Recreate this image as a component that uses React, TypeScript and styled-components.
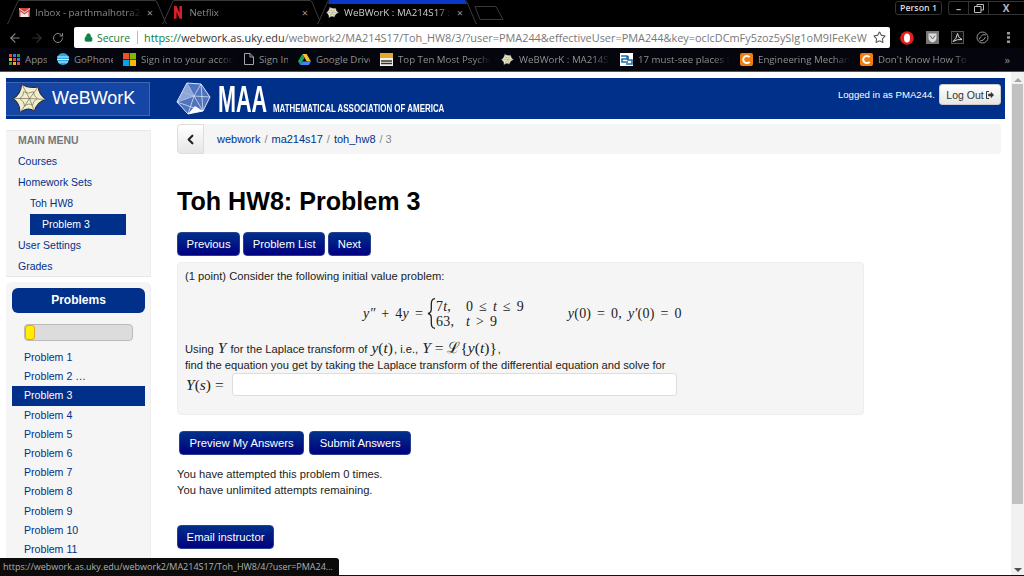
import React from 'react'
import styled, { createGlobalStyle } from 'styled-components'
import { ArrowLeft, ArrowRight, RotateCw, Star, Lock, ChevronLeft } from 'lucide-react'

const GlobalStyle = createGlobalStyle`
  html, body {
    margin: 0;
    padding: 0;
    height: 576px;
    overflow: hidden;
    background: #000;
  }
  * { box-sizing: border-box; }
`

const Screen = styled.div`
  position: relative;
  width: 1024px;
  height: 576px;
  display: flex;
  flex-direction: column;
  overflow: hidden;
  background: #000;
  font-family: "Liberation Sans", Arial, sans-serif;
`

/* ---- browser chrome ---- */

const TabStrip = styled.div`
  height: 27px;
  flex: none;
  display: flex;
  align-items: flex-start;
  padding-left: 7px;
`

const Tab = styled.div<{ $active?: boolean }>`
  position: relative;
  width: 160px;
  height: 24px;
  margin-right: -5px;
  padding: 0 14px 0 12px;
  display: flex;
  align-items: center;
  gap: 5px;
  font-family: "Open Sans", sans-serif;
  font-size: 9.7px;
  color: ${p => (p.$active ? '#cfcfcf' : '#8a8a8a')};
`

const TabOutline = styled.svg`
  position: absolute;
  left: 0;
  top: 0;
`

const TabIcon = styled.span<{ $shift?: number }>`
  position: relative;
  flex: none;
  display: flex;
  margin-left: ${p => p.$shift ?? 0}px;
`

const TabTitle = styled.span`
  flex: 1;
  position: relative;
  white-space: nowrap;
  overflow: hidden;
  mask-image: linear-gradient(to right, #000 85%, transparent);
`

const TabClose = styled.span`
  position: relative;
  font-size: 11px;
  color: #999;
`

const NewTab = styled.svg`
  margin: 6px 0 0 2px;
`

const Spacer = styled.div`
  flex: 1;
`

const PersonButton = styled.div`
  width: 47px;
  height: 14px;
  margin: 1px 6px 0 0;
  border: 1px solid #333;
  border-radius: 3px;
  font-family: "Open Sans", sans-serif;
  font-weight: 600;
  font-size: 8.8px;
  line-height: 12px;
  text-align: center;
  color: #ddd;
`

const WindowControls = styled.div`
  width: 76px;
  height: 14px;
  margin-top: 1px;
  display: flex;
  border: 1px solid #333;
  border-right: none;
  border-radius: 3px 0 0 3px;
`

const WindowButton = styled.div<{ $wide?: boolean }>`
  width: ${p => (p.$wide ? '34px' : '20px')};
  display: flex;
  align-items: center;
  justify-content: center;
  border-right: 1px solid #333;
  color: #bbb;
  font-family: "Open Sans", sans-serif;
  font-size: 10px;
  font-weight: 700;
  &:last-child { border-right: none; }
`

const Toolbar = styled.div`
  height: 21px;
  flex: none;
  display: flex;
  align-items: center;
  padding-left: 8px;
  color: #888;
`

const NavIcons = styled.div`
  width: 66px;
  display: flex;
  align-items: center;
  gap: 8px;
`

const Omnibox = styled.div`
  width: 816px;
  height: 21px;
  flex: none;
  background: #fff;
  border-radius: 2px;
  display: flex;
  align-items: center;
  padding: 0 4px 0 10px;
  font-family: "Open Sans", sans-serif;
  font-size: 10.9px;
  color: #777;
`

const Secure = styled.span`
  color: #0b8043;
  margin-left: 4px;
  font-size: 10.4px;
`

const OmniDivider = styled.span`
  width: 1px;
  height: 13px;
  background: #bbb;
  margin: 0 6px 0 7px;
`

const Url = styled.span`
  flex: 1;
  white-space: nowrap;
  overflow: hidden;
`

const UrlScheme = styled.span`
  color: #0b8043;
`

const UrlHost = styled.span`
  color: #333;
`

const BookmarkStar = styled(Star)`
  margin-left: 6px;
  flex: none;
`

const ExtIcons = styled.div`
  flex: 1;
  display: flex;
  align-items: center;
  padding-left: 10px;
  gap: 12px;
`

const MenuDots = styled.svg`
  margin-left: 6px;
`

const BookmarkBar = styled.div`
  height: 24px;
  flex: none;
  display: flex;
  align-items: center;
  padding: 0 14px 1px 9px;
  background: #05060d;
  border-bottom: 1px solid #555;
  gap: 10px;
  font-family: "Open Sans", sans-serif;
  font-size: 9.7px;
  color: #8f8f8f;
`

const Bookmark = styled.div<{ $w: number }>`
  width: ${p => p.$w}px;
  flex: none;
  display: flex;
  align-items: center;
  gap: 5px;
`

const BookmarkLabel = styled.span<{ $fade?: boolean }>`
  flex: 1;
  white-space: nowrap;
  overflow: hidden;
  ${p => (p.$fade ? 'mask-image: linear-gradient(to right, #000 82%, transparent);' : '')}
`

const MoreBookmarks = styled.span`
  margin-left: auto;
  font-size: 11px;
`

/* ---- page ---- */

const Viewport = styled.div`
  flex: 1;
  min-height: 0;
  display: flex;
  background: #fff;
`

const Page = styled.div`
  flex: 1;
  min-width: 0;
  overflow: hidden;
  padding: 6px 6px 0;
  color: #000;
`

const Banner = styled.header`
  height: 41px;
  background: #00308a;
  display: flex;
  align-items: center;
`

const Brand = styled.div`
  width: 144px;
  height: 34px;
  display: flex;
  align-items: center;
  gap: 5px;
  padding-left: 6px;
  background: #1546a5;
  border: 1px solid #3f66b0;
  border-left: none;
  color: #fff;
  font-size: 18px;
`

const MaaLogo = styled.div`
  margin-left: 26px;
  display: flex;
  align-items: flex-end;
  color: #fff;
`

const MaaLetters = styled.span`
  width: 49px;
  margin-left: 7px;
  font-weight: 700;
  font-size: 36px;
  line-height: 30px;
  transform: scaleX(0.6);
  transform-origin: left center;
`

const MaaName = styled.span`
  width: 172px;
  margin: 0 0 1px 6px;
  font-weight: 700;
  font-size: 11.2px;
  line-height: 12px;
  white-space: nowrap;
  transform: scaleX(0.71);
  transform-origin: left center;
`

const LoggedIn = styled.div`
  margin: 0 4px 8px auto;
  color: #fff;
  font-size: 9.6px;
`

const LogOutButton = styled.div`
  width: 62px;
  height: 21px;
  margin: 0 4px 8px 0;
  background: linear-gradient(#fff, #e6e6e6);
  border: 1px solid #ccc;
  border-radius: 3px;
  display: flex;
  align-items: center;
  justify-content: center;
  gap: 2px;
  font-size: 10.5px;
  color: #333;
`

const Body = styled.div`
  display: flex;
  align-items: flex-start;
`

const Sidebar = styled.aside`
  width: 145px;
  flex: none;
  margin-top: 11px;
`

const MenuPanel = styled.nav`
  height: 147px;
  background: #f5f5f5;
  box-shadow: inset 0 1px #e8e8e8, inset 0 -1px #e8e8e8, inset -1px 0 #eee;
`

const MenuItem = styled.div<{ $head?: boolean; $nested?: boolean; $active?: boolean }>`
  height: 21px;
  line-height: 20px;
  font-size: 10.5px;
  margin-left: ${p => (p.$nested ? '24px' : '0')};
  margin-right: ${p => (p.$nested ? '25px' : '0')};
  padding-left: ${p => (p.$active ? '12px' : p.$nested ? '0' : '12px')};
  color: ${p => (p.$head ? '#777' : p.$active ? '#fff' : '#00308a')};
  font-weight: ${p => (p.$head ? 700 : 400)};
  background: ${p => (p.$active ? '#00308a' : 'transparent')};
`

const ProblemsPanel = styled.div`
  margin-top: 5px;
  height: 400px;
  padding: 6px 5px 0 6px;
  background: #f5f5f5;
  border-radius: 6px 6px 0 0;
  border-right: 1px solid #eee;
`

const ProblemsTitle = styled.div`
  height: 25px;
  background: #00308a;
  border-radius: 6px;
  color: #fff;
  font-weight: 700;
  font-size: 12px;
  line-height: 24px;
  text-align: center;
`

const ProgressTrack = styled.div`
  width: 109px;
  height: 17px;
  margin: 11px 0 7px 12px;
  background: #dcdcdc;
  border: 1px solid #bbb;
  border-radius: 4px;
`

const ProgressFill = styled.div`
  height: 100%;
  background: #ffee00;
  border: 1px solid #f0a020;
  border-radius: 3px;
`

const ProblemRow = styled.div<{ $active?: boolean }>`
  height: 19.2px;
  padding-left: 12px;
  font-size: 10.6px;
  line-height: 19px;
  color: ${p => (p.$active ? '#fff' : '#00308a')};
  background: ${p => (p.$active ? '#00308a' : 'transparent')};
`

const Main = styled.main`
  flex: 1;
  min-width: 0;
  margin: 5px 4px 0 26px;
  font-size: 11.2px;
`

const Crumbs = styled.div`
  height: 30px;
  display: flex;
  align-items: stretch;
`

const BackButton = styled.div`
  width: 27px;
  display: flex;
  align-items: center;
  justify-content: center;
  background: linear-gradient(#fff, #e6e6e6);
  border: 1px solid #ddd;
  border-radius: 4px 0 0 4px;
  color: #222;
`

const CrumbTrail = styled.div`
  flex: 1;
  display: flex;
  align-items: center;
  gap: 4px;
  padding: 0 0 0 13px;
  background: #f5f5f5;
  border-radius: 0 4px 4px 0;
  color: #888;
  font-size: 11px;
`

const CrumbLink = styled.span`
  color: #00308a;
`

const Title = styled.h1`
  height: 32px;
  margin: 31px 0 15px;
  font-size: 25.1px;
  line-height: 32px;
  font-weight: 700;
  color: #000;
`

const ButtonRow = styled.div<{ $inset?: number; $gap: number }>`
  display: flex;
  gap: ${p => p.$gap}px;
  margin-left: ${p => p.$inset ?? 0}px;
`

const DarkButton = styled.div<{ $pad?: number }>`
  width: fit-content;
  height: 24px;
  padding: 0 ${p => p.$pad ?? 8.6}px;
  background: linear-gradient(#00308a, #000080);
  border: 1px solid #24408f;
  border-radius: 4px;
  color: #fff;
  font-size: 11.3px;
  line-height: 22px;
  white-space: nowrap;
`

const ProblemBox = styled.section`
  width: 687px;
  height: 153px;
  margin: 6px 0 16px;
  padding: 5px 8px 5px 7px;
  background: #f5f5f5;
  border: 1px solid #eee;
  border-radius: 4px;
  font-size: 11.2px;
  color: #222;
`

const TextLine = styled.div<{ $top?: number }>`
  height: 16px;
  line-height: 16px;
  margin-top: ${p => p.$top ?? 0}px;
  white-space: nowrap;
`

const Equation = styled.div`
  height: 31px;
  margin: 14px 0 0 178px;
  display: flex;
  align-items: center;
  gap: 4px;
`

const MathText = styled.span`
  font-family: "Liberation Serif", "Times New Roman", serif;
  font-size: 14px;
  word-spacing: 2.2px;
  letter-spacing: .2px;
  line-height: 15px;
  color: #222;
  white-space: nowrap;
`

const InlineMath = styled.span`
  font-family: "Liberation Serif", "Times New Roman", serif;
  font-size: 15.5px;
  line-height: 15px;
  margin: 0 1px;
  color: #222;
  white-space: nowrap;
`

const Var = styled.i`
  font-style: italic;
`

const Cases = styled.div`
  display: grid;
  grid-template-columns: 30px auto;
  margin-left: -4px;
  line-height: 15px;
`

const InitialValues = styled.div`
  margin-left: 40px;
`

const AnswerRow = styled.div`
  height: 23px;
  display: flex;
  align-items: center;
  gap: 4px;
`

const AnswerInput = styled.div`
  width: 445px;
  height: 23px;
  background: #fff;
  border: 1px solid #ddd;
  border-radius: 3px;
  margin-left: auto;
  margin-right: 178px;
`

const Messages = styled.div`
  margin: 11px 0 27px;
  font-size: 11.2px;
  color: #222;
`

const Scrollbar = styled.div`
  width: 13px;
  flex: none;
  display: flex;
  flex-direction: column;
  align-items: center;
  padding: 6px 0 3px;
  background: #f1f1f1;
`

const ScrollArrow = styled.div<{ $down?: boolean }>`
  width: 0;
  height: 0;
  border-left: 4px solid transparent;
  border-right: 4px solid transparent;
  ${p => (p.$down ? 'border-top: 4px solid #505050;' : 'border-bottom: 4px solid #a3a3a3;')}
`

const ScrollThumb = styled.div`
  width: 11px;
  height: 420px;
  margin-top: 2px;
  background: #c1c1c1;
`

const PageEdge = styled.div`
  height: 1px;
  flex: none;
  background: #111;
`

const StatusBubble = styled.div`
  position: absolute;
  left: 0;
  bottom: 0;
  width: 339px;
  height: 18px;
  background: #0b0b0b;
  border-radius: 0 3px 0 0;
  padding-left: 3px;
  font-family: "Open Sans", sans-serif;
  font-size: 9px;
  line-height: 17px;
  color: #b0b0b0;
  white-space: nowrap;
`

/* ---- drawings ---- */

const TabShape = ({ active }: { active?: boolean }) => (
  <TabOutline width="160" height="24">
    <path
      d="M0 23.5 H1 L11 1 Q11.5 .5 13 .5 H148 Q149 .5 150 2 L159 23.5 H160"
      fill={active ? '#000' : 'none'}
      stroke="#3a3a3a"
    />
    {active && <path d="M11 4 L12.5 0 H148 L150 4 Z" fill="#0a38c8" />}
  </TabOutline>
)

const WebworkStar = ({ size }: { size: number }) => (
  <svg width={size} height={size} viewBox="0 0 36 32">
    <path
      d="M10 1 Q17 6 27 4 Q27 11 35 17 Q26 19 23 29 Q16 24 8 31 Q9 22 1 16 Q9 12 10 1 Z"
      fill="#f2eecb"
      stroke="#27304a"
      strokeWidth="1.2"
    />
    <path
      d="M10 1 L18 16 L27 4 M18 16 L35 17 M18 16 L23 29 M18 16 L8 31 M18 16 L1 16 M12 9 Q17 12 22 9 Q22 13 26 16 Q22 18 21 23 Q17 20 13 24 Q13 19 8 16 Q12 14 12 9"
      fill="none"
      stroke="#6b6b55"
      strokeWidth=".7"
    />
  </svg>
)

const MaaMark = () => (
  <svg width="35" height="33" viewBox="0 0 35 33">
    <path d="M11 1 L25 2 L34 15 L27 29 L12 32 L1 20 Z" fill="#4f73bd" stroke="#dfe6f5" />
    <path
      d="M11 1 L18 14 L25 2 M18 14 L34 15 M18 14 L27 29 M18 14 L1 20 M18 14 L12 32 M11 1 L1 20 M6 10 L18 14 M25 2 L27 29 M1 20 L27 29"
      fill="none"
      stroke="#e6ecf8"
      strokeWidth=".7"
    />
    <path d="M19 24 L27 29 L12 32 Z" fill="#fff" />
    <path d="M1 20 L18 14 L11 1 Z" fill="#9db3de" opacity=".8" />
  </svg>
)

const GmailIcon = () => (
  <svg width="11" height="9" viewBox="0 0 11 9">
    <rect width="11" height="9" fill="#e8e8e8" />
    <path d="M0 9 V1 L5.5 5 L11 1 V9 H9.5 V3.5 L5.5 6.5 L1.5 3.5 V9 Z M0 0 L5.5 4 L11 0 Z" fill="#d8433a" />
  </svg>
)

const NetflixIcon = () => (
  <svg width="8" height="13" viewBox="0 0 8 13">
    <path d="M0 0 H2.6 L5.4 7 V0 H8 V13 L5.4 12.6 L2.6 6 V12.6 L0 13 Z" fill="#d81f26" />
  </svg>
)

const appsColours = ['#e04a3c', '#f2b01e', '#2d9c4e', '#3b78e7']

const AppsIcon = () => (
  <svg width="11" height="11" viewBox="0 0 11 11">
    {[0, 4, 8].map((y, row) =>
      [0, 4, 8].map((x, col) => (
        <rect key={`${x}-${y}`} x={x} y={y} width="3" height="3" fill={appsColours[(row + col * 3) % 4]} />
      ))
    )}
  </svg>
)

const GlobeIcon = () => (
  <svg width="12" height="12" viewBox="0 0 12 12">
    <circle cx="6" cy="6" r="6" fill="#2aa5e0" />
    <path d="M0 4 H12 M0 6.5 H12 M1 9 H11" stroke="#e8f6fd" strokeWidth=".9" />
  </svg>
)

const MsIcon = () => (
  <svg width="13" height="13" viewBox="0 0 13 13">
    <rect width="6.2" height="6.2" fill="#f25022" />
    <rect x="6.8" width="6.2" height="6.2" fill="#7fba00" />
    <rect y="6.8" width="6.2" height="6.2" fill="#00a4ef" />
    <rect x="6.8" y="6.8" width="6.2" height="6.2" fill="#ffb900" />
  </svg>
)

const DocIcon = () => (
  <svg width="10" height="12" viewBox="0 0 10 12">
    <path d="M.5 .5 H6 L9.5 4 V11.5 H.5 Z M6 .5 V4 H9.5" fill="none" stroke="#a5a5a5" />
  </svg>
)

const DriveIcon = () => (
  <svg width="13" height="11" viewBox="0 0 13 11">
    <path d="M4.4 0 H8.6 L13 7.4 H8.8 Z" fill="#fbc02d" />
    <path d="M4.4 0 L6.5 3.7 L2.2 11 L0 7.3 Z" fill="#1fa463" />
    <path d="M4.3 7.4 H13 L10.8 11 H2.2 Z" fill="#4285f4" />
  </svg>
)

const TensIcon = () => (
  <svg width="13" height="13" viewBox="0 0 13 13">
    <rect width="13" height="13" fill="#f3f1e4" />
    <rect width="13" height="5" fill="#e2a72e" />
    <path d="M1 8 H12 M1 10.5 H12" stroke="#333" strokeWidth="1.4" />
  </svg>
)

const SbsIcon = () => (
  <svg width="13" height="13" viewBox="0 0 13 13">
    <rect width="13" height="13" fill="#fff" />
    <path d="M1 3 H7 V6 H2 V9 H8 M8 3 V7 H12 V11 H6" fill="none" stroke="#1d6fa5" strokeWidth="1.6" />
  </svg>
)

const OrangeC = () => (
  <svg width="13" height="13" viewBox="0 0 13 13">
    <rect width="13" height="13" rx="2" fill="#f07c12" />
    <path d="M9.6 4.2 A3.6 3.6 0 1 0 9.6 8.8" fill="none" stroke="#fff" strokeWidth="2" />
  </svg>
)

const StopIcon = () => (
  <svg width="14" height="14" viewBox="0 0 14 14">
    <circle cx="7" cy="7" r="6.8" fill="#e0201c" />
    <ellipse cx="7" cy="7" rx="3" ry="4.6" fill="#fff" />
  </svg>
)

const ShieldIcon = () => (
  <svg width="13" height="13" viewBox="0 0 13 13">
    <rect width="13" height="13" fill="#777" />
    <path d="M2.5 2.5 H10.5 V7 Q10.5 10 6.5 11.5 Q2.5 10 2.5 7 Z" fill="#ddd" />
    <path d="M4 4.5 L6.5 8 L9 4.5" fill="none" stroke="#666" />
  </svg>
)

const PdfIcon = () => (
  <svg width="13" height="13" viewBox="0 0 13 13">
    <rect x=".5" y=".5" width="12" height="12" fill="#111" stroke="#d02018" />
    <path d="M2 10.5 Q5.5 8 6.5 2.5 Q7 7 11 8.5 Q6 8 2 10.5 Z" fill="none" stroke="#e8e8e8" strokeWidth=".9" />
  </svg>
)

const RingIcon = () => (
  <svg width="13" height="13" viewBox="0 0 13 13">
    <circle cx="6.5" cy="6.5" r="5.5" fill="none" stroke="#9a9a9a" />
    <path d="M3 8.5 Q6 2 10 4 M4 10 Q8 10 9.5 6" fill="none" stroke="#9a9a9a" />
  </svg>
)

const DotsIcon = () => (
  <MenuDots width="3" height="11" viewBox="0 0 3 11">
    <path d="M0 0 H3 V2.4 H0 Z M0 4.3 H3 V6.7 H0 Z M0 8.6 H3 V11 H0 Z" fill="#9a9a9a" />
  </MenuDots>
)

const LogOutGlyph = () => (
  <svg width="8" height="8" viewBox="0 0 8 8">
    <path d="M3 .5 H.5 V7.5 H3" fill="none" stroke="#333" />
    <path d="M2.2 2.8 H4.8 V.8 L8 4 L4.8 7.2 V5.2 H2.2 Z" fill="#333" />
  </svg>
)

const CurlyBrace = () => (
  <svg width="9" height="31" viewBox="0 0 9 31">
    <path
      d="M8 .6 C4.5 1.2 4.3 3.5 4.3 7 V11 C4.3 13.5 3.2 15 1 15.5 C3.2 16 4.3 17.5 4.3 20 V24 C4.3 27.5 4.5 29.8 8 30.4"
      fill="none"
      stroke="#222"
      strokeWidth="1.3"
    />
  </svg>
)

const bookmarks: { icon: React.ReactNode; label: string; w: number; fade?: boolean }[] = [
  { icon: <AppsIcon />, label: 'Apps', w: 38 },
  { icon: <GlobeIcon />, label: 'GoPhone', w: 56 },
  { icon: <MsIcon />, label: 'Sign in to your account', w: 111, fade: true },
  { icon: <DocIcon />, label: 'Sign In', w: 44 },
  { icon: <DriveIcon />, label: 'Google Drive', w: 72 },
  { icon: <TensIcon />, label: 'Top Ten Most Psychedelic Films', w: 111, fade: true },
  { icon: <WebworkStar size={13} />, label: 'WeBWorK : MA214S17 : Toh', w: 109, fade: true },
  { icon: <SbsIcon />, label: '17 must-see places to visit in', w: 110, fade: true },
  { icon: <OrangeC />, label: 'Engineering Mechanics Dynamics', w: 110, fade: true },
  { icon: <OrangeC />, label: "Don't Know How To Solve This", w: 110, fade: true },
]

const problems = [
  'Problem 1', 'Problem 2 …', 'Problem 3', 'Problem 4', 'Problem 5', 'Problem 6',
  'Problem 7', 'Problem 8', 'Problem 9', 'Problem 10', 'Problem 11', 'Problem 12',
]

export default function App() {
  return (
    <Screen>
      <GlobalStyle />

      <TabStrip>
        <Tab>
          <TabShape />
          <TabIcon><GmailIcon /></TabIcon>
          <TabTitle>Inbox - parthmalhotra23@gmail.com</TabTitle>
          <TabClose>×</TabClose>
        </Tab>
        <Tab>
          <TabShape />
          <TabIcon><NetflixIcon /></TabIcon>
          <TabTitle>&nbsp;Netflix</TabTitle>
          <TabClose>×</TabClose>
        </Tab>
        <Tab $active>
          <TabShape active />
          <TabIcon $shift={-3}><WebworkStar size={13} /></TabIcon>
          <TabTitle>WeBWorK : MA214S17 : Toh</TabTitle>
          <TabClose>×</TabClose>
        </Tab>
        <NewTab width="30" height="14" viewBox="0 0 30 14">
          <path d="M1 .5 H22 L29 13.5 H6 Z" fill="none" stroke="#3a3a3a" />
        </NewTab>
        <Spacer />
        <PersonButton>Person 1</PersonButton>
        <WindowControls>
          <WindowButton>–</WindowButton>
          <WindowButton>
            <svg width="10" height="9" viewBox="0 0 10 9">
              <path d="M.5 2.5 H7 V8.5 H.5 Z M3 2.5 V.5 H9.5 V6 H7" fill="none" stroke="#bbb" />
            </svg>
          </WindowButton>
          <WindowButton $wide>X</WindowButton>
        </WindowControls>
      </TabStrip>

      <Toolbar>
        <NavIcons>
          <ArrowLeft size={14} />
          <ArrowRight size={14} color="#333" />
          <RotateCw size={12} />
        </NavIcons>
        <Omnibox>
          <Lock size={9} color="#0b8043" fill="#0b8043" />
          <Secure>Secure</Secure>
          <OmniDivider />
          <Url>
            <UrlScheme>https://</UrlScheme>
            <UrlHost>webwork.as.uky.edu</UrlHost>
            /webwork2/MA214S17/Toh_HW8/3/?user=PMA244&amp;effectiveUser=PMA244&amp;key=oclcDCmFy5zoz5ySIg1oM9IFeKeWm
          </Url>
          <BookmarkStar size={13} color="#555" />
        </Omnibox>
        <ExtIcons>
          <StopIcon />
          <ShieldIcon />
          <PdfIcon />
          <RingIcon />
          <DotsIcon />
        </ExtIcons>
      </Toolbar>

      <BookmarkBar>
        {bookmarks.map(b => (
          <Bookmark key={b.label} $w={b.w}>
            {b.icon}
            <BookmarkLabel $fade={b.fade}>{b.label}</BookmarkLabel>
          </Bookmark>
        ))}
        <MoreBookmarks>»</MoreBookmarks>
      </BookmarkBar>

      <Viewport>
        <Page>
          <Banner>
            <Brand>
              <WebworkStar size={35} />
              WeBWorK
            </Brand>
            <MaaLogo>
              <MaaMark />
              <MaaLetters>MAA</MaaLetters>
              <MaaName>MATHEMATICAL ASSOCIATION OF AMERICA</MaaName>
            </MaaLogo>
            <LoggedIn>Logged in as PMA244.</LoggedIn>
            <LogOutButton>
              Log Out <LogOutGlyph />
            </LogOutButton>
          </Banner>

          <Body>
            <Sidebar>
              <MenuPanel>
                <MenuItem $head>MAIN MENU</MenuItem>
                <MenuItem>Courses</MenuItem>
                <MenuItem>Homework Sets</MenuItem>
                <MenuItem $nested>Toh HW8</MenuItem>
                <MenuItem $nested $active>Problem 3</MenuItem>
                <MenuItem>User Settings</MenuItem>
                <MenuItem>Grades</MenuItem>
              </MenuPanel>
              <ProblemsPanel>
                <ProblemsTitle>Problems</ProblemsTitle>
                <ProgressTrack>
                  <ProgressFill style={{ width: `${(10 / 107) * 100}%` }} />
                </ProgressTrack>
                {problems.map(name => (
                  <ProblemRow key={name} $active={name === 'Problem 3'}>{name}</ProblemRow>
                ))}
              </ProblemsPanel>
            </Sidebar>

            <Main>
              <Crumbs>
                <BackButton><ChevronLeft size={15} strokeWidth={3.4} /></BackButton>
                <CrumbTrail>
                  <CrumbLink>webwork</CrumbLink> / <CrumbLink>ma214s17</CrumbLink> / <CrumbLink>toh_hw8</CrumbLink> / 3
                </CrumbTrail>
              </Crumbs>

              <Title>Toh HW8: Problem 3</Title>

              <ButtonRow $gap={3}>
                <DarkButton>Previous</DarkButton>
                <DarkButton>Problem List</DarkButton>
                <DarkButton>Next</DarkButton>
              </ButtonRow>

              <ProblemBox>
                <TextLine>(1 point) Consider the following initial value problem:</TextLine>
                <Equation>
                  <MathText><Var>y″</Var> + 4<Var>y</Var> =</MathText>
                  <CurlyBrace />
                  <Cases>
                    <MathText>7<Var>t</Var>,</MathText>
                    <MathText>0 ≤ <Var>t</Var> ≤ 9</MathText>
                    <MathText>63,</MathText>
                    <MathText><Var>t</Var> &gt; 9</MathText>
                  </Cases>
                  <InitialValues>
                    <MathText><Var>y</Var>(0) = 0, <Var>y′</Var>(0) = 0</MathText>
                  </InitialValues>
                </Equation>
                <TextLine $top={11}>
                  Using <InlineMath><Var>Y</Var></InlineMath> for the Laplace transform of <InlineMath><Var>y</Var>(<Var>t</Var>)</InlineMath>, i.e., <InlineMath><Var>Y</Var> = ℒ{'{'}<Var>y</Var>(<Var>t</Var>){'}'}</InlineMath>,
                </TextLine>
                <TextLine $top={1}>find the equation you get by taking the Laplace transform of the differential equation and solve for</TextLine>
                <AnswerRow>
                  <InlineMath><Var>Y</Var>(<Var>s</Var>) =</InlineMath>
                  <AnswerInput />
                </AnswerRow>
              </ProblemBox>

              <ButtonRow $gap={5} $inset={2}>
                <DarkButton $pad={9.5}>Preview My Answers</DarkButton>
                <DarkButton $pad={9.5}>Submit Answers</DarkButton>
              </ButtonRow>

              <Messages>
                <TextLine>You have attempted this problem 0 times.</TextLine>
                <TextLine>You have unlimited attempts remaining.</TextLine>
              </Messages>

              <DarkButton>Email instructor</DarkButton>
            </Main>
          </Body>
        </Page>

        <Scrollbar>
          <ScrollArrow />
          <ScrollThumb />
          <Spacer />
          <ScrollArrow $down />
        </Scrollbar>
      </Viewport>
      <PageEdge />

      <StatusBubble>https://webwork.as.uky.edu/webwork2/MA214S17/Toh_HW8/4/?user=PMA24...</StatusBubble>
    </Screen>
  )
}
